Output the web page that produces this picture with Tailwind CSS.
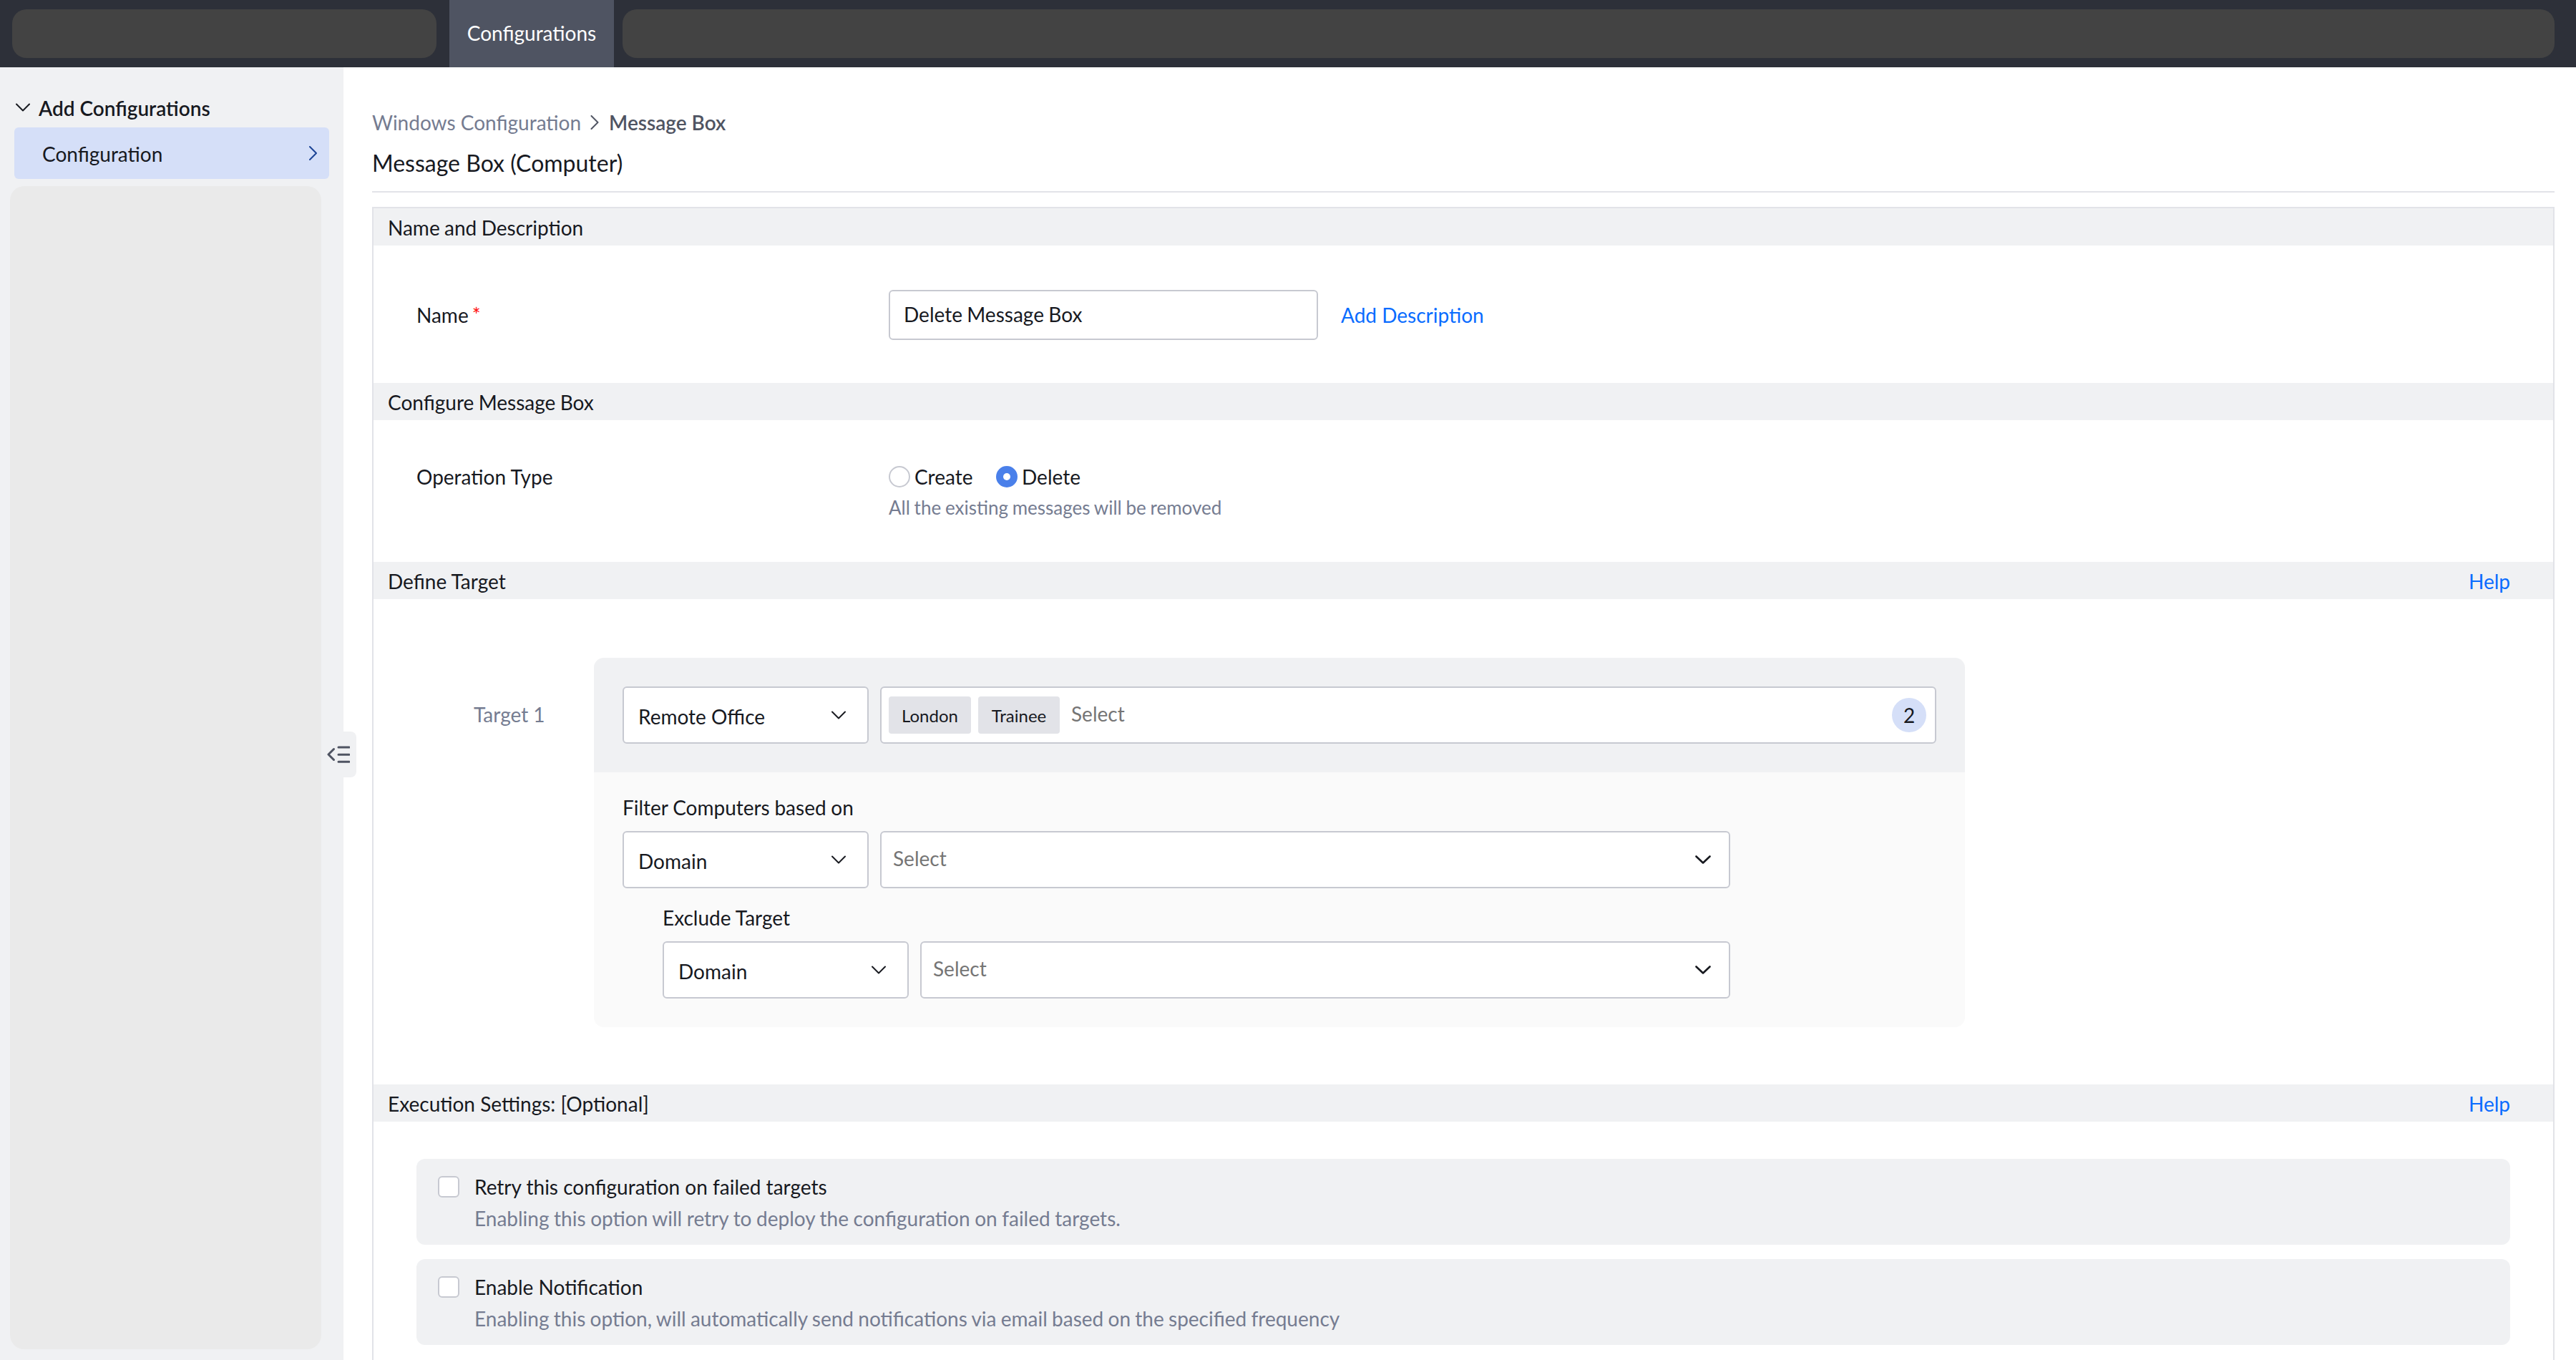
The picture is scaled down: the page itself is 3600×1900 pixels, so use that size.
<!DOCTYPE html>
<html lang="en">
<head>
  <meta charset="UTF-8" />
  <meta name="viewport" content="width=device-width, initial-scale=1.0" />
  <title>Message Box Configuration</title>
  <script src="https://cdn.jsdelivr.net/npm/@tailwindcss/browser@4"></script>
</head>
<body class="bg-white h-[1900px] overflow-hidden font-[Lato,sans-serif] text-[28px] leading-[34px] text-[#17191f]">

  <header class="flex h-[94px] bg-[#2d3039] py-[13px] pl-[17px] pr-[30px]">
    <div class="w-[593px] rounded-[20px] bg-[#434343]"></div>
    <div class="-my-[13px] ml-[18px] flex w-[230px] items-center justify-center bg-[#4f5462] pb-0.5 text-white">Configurations</div>
    <div class="ml-3 flex-1 rounded-[20px] bg-[#434343]"></div>
  </header>

  <div class="flex h-[1806px]">
    <aside class="relative w-[480px] shrink-0 bg-[#f0f1f3] pt-[40px]">
      <div class="flex h-[34px] items-center pl-[22px] font-semibold">
        <svg class="mb-0.5 mr-3 h-3 w-5" viewBox="0 0 20 12" fill="none" stroke="#17191f" stroke-width="2" stroke-linecap="round" stroke-linejoin="round"><path d="M1 1.5l9 9 9-9" /></svg>
        Add Configurations
      </div>
      <div class="ml-5 mt-[10px] flex h-[72px] w-[440px] items-center justify-between rounded-md bg-[#d5dff8] pl-[39px] pr-[17px]">
        <span class="pt-0.5">Configuration</span>
        <svg class="h-5 w-[11px]" viewBox="0 0 11 20" fill="none" stroke="#1d4596" stroke-width="2" stroke-linecap="round" stroke-linejoin="round"><path d="M1 1l9 9-9 9" /></svg>
      </div>
      <div class="ml-[14px] mt-[10px] h-[1625px] w-[435px] rounded-[20px] bg-[#eaeaea]"></div>

      <!-- collapse handle -->
      <div class="absolute left-[449px] top-[928px] flex h-16 w-[49px] items-center rounded-r-lg bg-[#f0f1f3] pl-2">
        <svg class="h-6 w-8" viewBox="0 0 32 24" fill="none" stroke="#4f5462" stroke-width="3" stroke-linecap="round" stroke-linejoin="round"><path d="M9.5 4.5L2 12l7.5 7.500M16 2h15M16 12.2h15M16 22.3h15" /></svg>
      </div>
    </aside>

    <main class="flex-1 pl-10 pr-[30px]">
      <div class="mt-[60px] flex h-[34px] items-center">
        <span class="text-[#757c91]">Windows Configuration</span>
        <svg class="ml-[13px] mr-[14px] h-5 w-3" viewBox="0 0 12 20" fill="none" stroke="#4f5462" stroke-width="2" stroke-linecap="round" stroke-linejoin="round"><path d="M1.5 1l9 9-9 9" /></svg>
        <span class="font-semibold text-[#4f5462]">Message Box</span>
      </div>
      <h1 class="mt-5 h-[61px] border-b-2 border-[#e2e3e8] text-[32px] leading-[40px]">Message Box (Computer)</h1>

      <div class="mt-5 h-[1620px] border-2 border-[#e2e3e8]">
        <section class="h-[244px]">
          <h2 class="h-[52px] bg-[#f0f1f3] pl-5 pt-[10px] [word-spacing:-0.8px]">Name and Description</h2>
          <div class="mt-[62px] flex h-[70px] items-center">
            <label class="w-[720px] pl-[60px] [word-spacing:-2px]">Name <span class="text-[#ff1010]">*</span></label>
            <div class="flex h-[70px] w-[600px] items-center rounded-md border-2 border-[#c7c9d1] pb-0.5 pl-[19px] [word-spacing:-0.8px]">Delete Message Box</div>
            <a class="ml-8 text-[#0a6cff]">Add Description</a>
          </div>
        </section>

        <section class="h-[250px]">
          <h2 class="h-[52px] bg-[#f0f1f3] pl-5 pt-[10px] [word-spacing:-0.8px]">Configure Message Box</h2>
          <div class="mt-[62px] flex">
            <label class="w-[720px] pl-[60px]">Operation Type</label>
            <div>
              <div class="flex h-[34px] items-center">
                <span class="h-[30px] w-[30px] rounded-full border-2 border-[#c7c9d1]"></span>
                <span class="ml-[6px] w-[114px]">Create</span>
                <span class="flex h-[30px] w-[30px] items-center justify-center rounded-full bg-[#4a80ea]"><span class="h-[10px] w-[10px] rounded-full bg-white"></span></span>
                <span class="ml-[6px]">Delete</span>
              </div>
              <p class="mt-[10px] text-[26px] leading-8 text-[#757c91] [word-spacing:-0.9px]">All the existing messages will be removed</p>
            </div>
          </div>
        </section>

        <section class="h-[730px]">
          <h2 class="flex h-[52px] justify-between bg-[#f0f1f3] pl-5 pr-[60px] pt-[10px]">Define Target <a class="text-[#0a6cff]">Help</a></h2>
          <div class="mt-[82px] flex">
            <label class="w-[308px] pl-[140px] pt-[62px] text-[#757c91]">Target 1</label>
            <div class="w-[1916px] overflow-hidden rounded-[14px] bg-[#fafafa]">
              <div class="flex h-[160px] gap-4 bg-[#f0f1f3] p-10">
                <div class="flex h-20 w-[344px] items-center justify-between rounded-md border-2 border-[#c7c9d1] bg-white pl-5 pr-[30px]">
                  <span class="pt-1">Remote Office</span>
                  <svg class="h-3 w-5" viewBox="0 0 20 12" fill="none" stroke="#17191f" stroke-width="2" stroke-linecap="round" stroke-linejoin="round"><path d="M1 1.5l9 9 9-9" /></svg>
                </div>
                <div class="flex h-20 flex-1 items-center rounded-md border-2 border-[#c7c9d1] bg-white pl-[10px] pr-[12px]">
                  <span class="flex h-[52px] w-[115px] items-center justify-center rounded bg-[#e2e3e8] pt-0.5 text-[24px]">London</span>
                  <span class="ml-[10px] flex h-[52px] w-[114px] items-center justify-center rounded bg-[#e2e3e8] pt-0.5 text-[24px]">Trainee</span>
                  <span class="ml-4 flex-1 pb-1 text-[#757575]">Select</span>
                  <span class="flex h-12 w-12 items-center justify-center rounded-full bg-[#d5dff8]">2</span>
                </div>
              </div>
              <div class="h-[356px] pl-10 pt-[32px]">
                <p class="[word-spacing:-0.5px]">Filter Computers based on</p>
                <div class="mt-4 flex gap-4">
                  <div class="flex h-20 w-[344px] items-center justify-between rounded-md border-2 border-[#c7c9d1] bg-white pl-5 pr-[30px]">
                    <span class="pt-1">Domain</span>
                    <svg class="h-3 w-5" viewBox="0 0 20 12" fill="none" stroke="#17191f" stroke-width="2" stroke-linecap="round" stroke-linejoin="round"><path d="M1 1.5l9 9 9-9" /></svg>
                  </div>
                  <div class="flex h-20 w-[1188px] items-center justify-between rounded-md border-2 border-[#c7c9d1] bg-white pl-4 pr-[25px]">
                    <span class="pb-1 text-[#757575]">Select</span>
                    <svg class="h-3 w-[22px]" viewBox="0 0 22 12" fill="none" stroke="#17191f" stroke-width="2.6" stroke-linecap="round" stroke-linejoin="round"><path d="M1.5 1.5l9.5 9 9.5-9" /></svg>
                  </div>
                </div>
                <div class="mt-[24px] pl-14">
                  <p>Exclude Target</p>
                  <div class="mt-4 flex gap-4">
                    <div class="flex h-20 w-[344px] items-center justify-between rounded-md border-2 border-[#c7c9d1] bg-white pl-5 pr-[30px]">
                      <span class="pt-1">Domain</span>
                      <svg class="h-3 w-5" viewBox="0 0 20 12" fill="none" stroke="#17191f" stroke-width="2" stroke-linecap="round" stroke-linejoin="round"><path d="M1 1.5l9 9 9-9" /></svg>
                    </div>
                    <div class="flex h-20 w-[1132px] items-center justify-between rounded-md border-2 border-[#c7c9d1] bg-white pl-4 pr-[25px]">
                      <span class="pb-1 text-[#757575]">Select</span>
                      <svg class="h-3 w-[22px]" viewBox="0 0 22 12" fill="none" stroke="#17191f" stroke-width="2.6" stroke-linecap="round" stroke-linejoin="round"><path d="M1.5 1.5l9.5 9 9.5-9" /></svg>
                    </div>
                  </div>
                </div>
              </div>
            </div>
          </div>
        </section>

        <section>
          <h2 class="flex h-[52px] justify-between bg-[#f0f1f3] pl-5 pr-[60px] pt-[10px]">Execution Settings: [Optional] <a class="text-[#0a6cff]">Help</a></h2>
          <div class="mt-[52px] flex flex-col gap-5 px-[60px]">
            <div class="flex h-[120px] rounded-xl bg-[#f0f1f3] pl-[30px] pt-6">
              <span class="h-[30px] w-[30px] rounded-md border-2 border-[#c7c9d1] bg-white"></span>
              <div class="-mt-0.5 ml-[21px]">
                <p>Retry this configuration on failed targets</p>
                <p class="mt-[10px] text-[#757c91] [word-spacing:-0.6px]">Enabling this option will retry to deploy the configuration on failed targets.</p>
              </div>
            </div>
            <div class="flex h-[120px] rounded-xl bg-[#f0f1f3] pl-[30px] pt-6">
              <span class="h-[30px] w-[30px] rounded-md border-2 border-[#c7c9d1] bg-white"></span>
              <div class="-mt-0.5 ml-[21px]">
                <p>Enable Notification</p>
                <p class="mt-[10px] text-[#757c91] [word-spacing:-0.9px]">Enabling this option, will automatically send notifications via email based on the specified frequency</p>
              </div>
            </div>
          </div>
        </section>
      </div>
    </main>
  </div>
</body>
</html>
